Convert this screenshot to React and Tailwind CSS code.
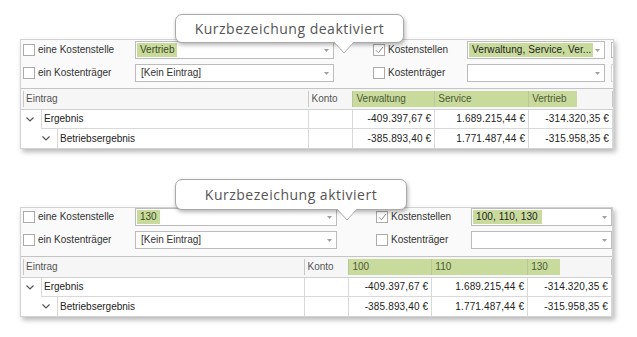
import React from "react";

const FONT = { fontFamily: '"Liberation Sans", Arial, sans-serif' };

function Check({ checked }) {
  return (
    <div className="w-[12px] h-[12px] border border-[#ababab] bg-white flex items-center justify-center shrink-0">
      {checked && (
        <svg width="9" height="8" viewBox="0 0 9 8">
          <path d="M1 4.3 L3.4 6.7 L8 1" fill="none" stroke="#8c8c8c" strokeWidth="1" />
        </svg>
      )}
    </div>
  );
}

function Arrow() {
  return (
    <svg width="5" height="3" viewBox="0 0 5 3" className="shrink-0">
      <path d="M0 0H5L2.5 3Z" fill="#a0a0a0" />
    </svg>
  );
}

function Combo({ w, children }) {
  return (
    <div
      className="h-[18px] border border-[#bcbcbc] bg-white flex items-center pl-[1px] pr-[4px] shrink-0"
      style={{ width: w }}
    >
      <div className="flex-1 flex items-center overflow-hidden">{children}</div>
      <Arrow />
    </div>
  );
}

function Label({ checked, text, w }) {
  return (
    <div className="flex items-center gap-[3px] shrink-0" style={{ width: w }}>
      <Check checked={checked} />
      <span className="text-[10px] text-[#333] leading-none">{text}</span>
    </div>
  );
}

function GreenTag({ children }) {
  return (
    <span className="bg-[#c8da9c] h-[14px] flex items-center px-[3px] text-[10px] text-[#3d4a22] leading-none whitespace-nowrap">
      {children}
    </span>
  );
}

function Chevron() {
  return (
    <svg width="8" height="5" viewBox="0 0 8 5">
      <path d="M0.5 0.5 L4 4 L7.5 0.5" fill="none" stroke="#555" strokeWidth="1.2" />
    </svg>
  );
}

function Panel({ cfg }) {
  const c = cfg.cols;
  return (
    <div
      className="bg-white border border-[#d2d2d2] shadow-[2px_3px_5px_rgba(0,0,0,0.28)] flex flex-col"
      style={{ width: cfg.width }}
    >
      <div
        className="bg-[#fafafa] border-b border-[#c4c4c4] flex flex-col gap-[5px]"
        style={{ paddingTop: cfg.pt, paddingBottom: cfg.pb }}
      >
        <div className="flex items-center pl-[2px]">
          <Label text="eine Kostenstelle" w={cfg.lw1 - 2} />
          <Combo w={cfg.cw1}>
            <GreenTag>{cfg.combo1}</GreenTag>
          </Combo>
          <div className="shrink-0" style={{ width: cfg.sp }} />
          <Label checked text="Kostenstellen" w={cfg.lw2} />
          <Combo w={cfg.cw2}>
            <span
              className="bg-[#c8da9c] h-[14px] flex items-center px-[3px] text-[10px] text-[#222] leading-none whitespace-nowrap tracking-[0.1px] shrink-0"
              style={{ width: cfg.green2 }}
            >
              {cfg.combo2}
            </span>
          </Combo>
          {cfg.extra && (
            <div className="ml-[6px] h-[16px] w-[4px] border-l border-t border-b border-[#bdbdbd] bg-white" />
          )}
        </div>
        <div className="flex items-center pl-[2px]">
          <Label text="ein Kostenträger" w={cfg.lw1 - 2} />
          <Combo w={cfg.cw1}>
            <span className="pl-[4px] text-[10px] text-[#333] leading-none">[Kein Eintrag]</span>
          </Combo>
          <div className="shrink-0" style={{ width: cfg.sp }} />
          <Label text="Kostenträger" w={cfg.lw2} />
          <Combo w={cfg.cw2} />
          {cfg.extra && (
            <div className="ml-[6px] h-[18px] w-[4px] border-l border-t border-b border-[#d6d6d6] bg-white" />
          )}
        </div>
      </div>
      <div className="h-[21px] bg-[#f6f6f6] border-b border-[#d0d0d0] flex">
        <div className="flex items-stretch py-[2px]" style={{ width: c[0] }}>
          <div className="ml-[2px] border-l border-[#c8c8c8] pl-[2px] flex items-center text-[10px] text-[#555] leading-none">
            Eintrag
          </div>
        </div>
        <div
          className="border-l border-[#c8c8c8] my-[2px] pl-[3px] flex items-center text-[10px] text-[#555] leading-none"
          style={{ width: c[1] }}
        >
          Konto
        </div>
        {cfg.heads.map((h, i) => (
          <div
            key={i}
            className="border-l border-[#b9c79a] my-[2px] flex items-stretch"
            style={{ width: c[2 + i] }}
          >
            <div
              className="bg-[#c8da9c] pl-[3px] flex items-center text-[10px] text-[#4e5a36] leading-none"
              style={{ width: i === 2 ? cfg.lastGreen : "100%" }}
            >
              {h}
            </div>
          </div>
        ))}
        <div className="border-l border-[#c8c8c8] my-[2px]" />
      </div>
      {cfg.rows.map((r, ri) => (
        <div key={ri} className="h-[19px] flex">
          <div className="flex" style={{ width: c[0] }}>
            <div
              className="flex items-center justify-end pr-[7px] shrink-0"
              style={{ width: ri === 0 ? 20 : 36 }}
            >
              <Chevron />
            </div>
            <div
              className={
                "flex-1 border-l border-[#d9d9d9] pl-[2px] flex items-center text-[10px] text-[#222] leading-none " +
                (ri === 0 ? "border-b" : "")
              }
            >
              {r.name}
            </div>
          </div>
          <div
            className={"border-l border-[#d9d9d9] " + (ri === 0 ? "border-b" : "")}
            style={{ width: c[1] }}
          />
          {r.vals.map((v, vi) => (
            <div
              key={vi}
              className={
                "border-l border-[#d9d9d9] flex items-center justify-end pr-[3px] text-[10px] text-[#222] leading-none tracking-[0.15px] " +
                (ri === 0 ? "border-b" : "")
              }
              style={{ width: c[2 + vi] }}
            >
              {v}
            </div>
          ))}
          <div className={"flex-1 border-l border-[#d9d9d9] " + (ri === 0 ? "border-b" : "")} />
        </div>
      ))}
    </div>
  );
}

function Callout({ text, left, top, w, h, tipX }) {
  return (
    <>
      <div
        className="absolute bg-white border border-[#a9a9a9] rounded-[7px] shadow-[1px_2px_4px_rgba(0,0,0,0.3)] flex items-center justify-center text-[14px] text-[#555] tracking-[0.5px]"
        style={{
          left,
          top,
          width: w,
          height: h,
          fontFamily: '"Open Sans", "Noto Sans", sans-serif',
        }}
      >
        {text}
      </div>
      <svg
        className="absolute"
        width="22"
        height="14"
        viewBox="0 0 22 14"
        style={{ left: tipX - 11, top: top + h - 2 }}
      >
        <path d="M0 0 L11 12 L22 0 Z" fill="white" />
        <path d="M1 1 L11 12 L21 1" fill="none" stroke="#a9a9a9" strokeWidth="1" />
      </svg>
    </>
  );
}

const rowsData = [
  { name: "Ergebnis", vals: ["-409.397,67 €", "1.689.215,44 €", "-314.320,35 €"] },
  { name: "Betriebsergebnis", vals: ["-385.893,40 €", "1.771.487,44 €", "-315.958,35 €"] },
];

const top = {
  width: 594,
  pt: 1,
  pb: 6,
  lw1: 114,
  cw1: 199,
  sp: 39,
  lw2: 94,
  cw2: 138,
  extra: true,
  combo1: "Vertrieb",
  combo2: "Verwaltung, Service, Ver...",
  green2: 124,
  cols: [287, 45, 82, 94, 84],
  heads: ["Verwaltung", "Service", "Vertrieb"],
  lastGreen: 48,
  rows: rowsData,
};

const bottom = {
  width: 593,
  pt: 0,
  pb: 7,
  lw1: 114,
  cw1: 202,
  sp: 39,
  lw2: 95,
  cw2: 141,
  extra: false,
  combo1: "130",
  combo2: "100, 110, 130",
  green2: 69,
  cols: [283, 45, 83, 96, 84],
  heads: ["100", "110", "130"],
  lastGreen: 32,
  rows: rowsData,
};

export default function App() {
  return (
    <div className="relative w-[637px] h-[337px] bg-white overflow-hidden" style={FONT}>
      <div className="flex flex-col pl-[20px] pt-[39px]">
        <Panel cfg={top} />
        <div className="h-[58px]" />
        <Panel cfg={bottom} />
      </div>
      <Callout text="Kurzbezeichung deaktiviert" left={175} top={14} w={229} h={29} tipX={344} />
      <Callout text="Kurzbezeichung aktiviert" left={175} top={179} w={232} h={31} tipX={347} />
    </div>
  );
}
